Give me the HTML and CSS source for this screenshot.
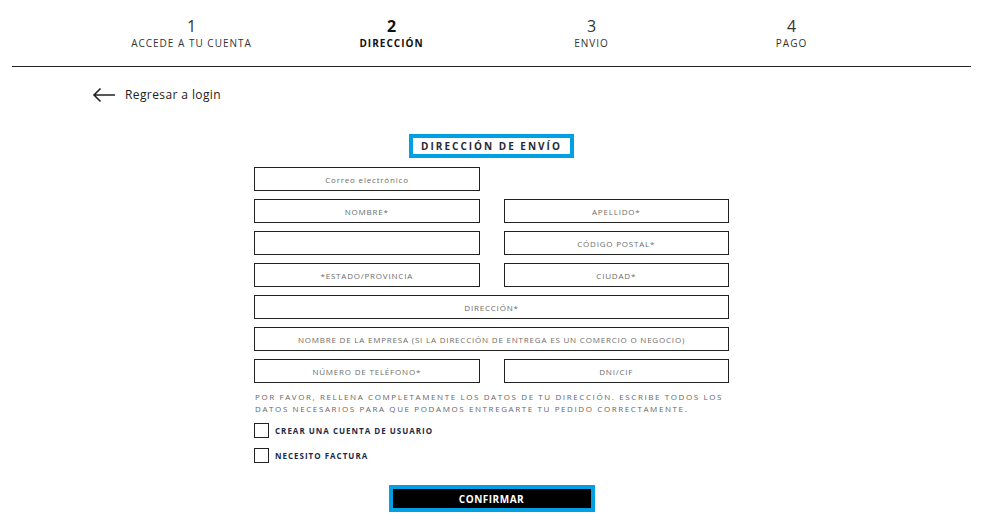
FILE: index.html
```html
<!DOCTYPE html>
<html lang="es">
<head>
    <meta charset="UTF-8">
    <meta name="viewport" content="width=device-width, initial-scale=1.0">
    <title>Dirección de envío</title>
    <link rel="stylesheet" href="styles.css">
</head>
<body>

<div id="checkout">
    <div class="steps">
        <div class="step">
            <div class="step-num">1</div>
            <div class="step-label">ACCEDE A TU CUENTA</div>
        </div>
        <div class="step active">
            <div class="step-num">2</div>
            <div class="step-label">DIRECCIÓN</div>
        </div>
        <div class="step">
            <div class="step-num">3</div>
            <div class="step-label">ENVIO</div>
        </div>
        <div class="step">
            <div class="step-num">4</div>
            <div class="step-label">PAGO</div>
        </div>
    </div>

    <a class="back-link" href="#">
        <svg width="24" height="16" viewBox="0 0 24 16">
            <path d="M23 8H2M8.5 1.5L2 8l6.5 6.5" fill="none" stroke="#222" stroke-width="1.6"/>
        </svg>
        <span>Regresar a login</span>
    </a>

    <div class="form-title-wrap">
        <h2 class="form-title">DIRECCIÓN DE ENVÍO</h2>
    </div>

    <form class="address-form">
        <div class="row">
            <input class="field" type="email" placeholder="Correo electrónico">
        </div>
        <div class="row">
            <input class="field" type="text" placeholder="NOMBRE*">
            <input class="field" type="text" placeholder="APELLIDO*">
        </div>
        <div class="row">
            <input class="field" type="text">
            <input class="field" type="text" placeholder="CÓDIGO POSTAL*">
        </div>
        <div class="row">
            <input class="field" type="text" placeholder="*ESTADO/PROVINCIA">
            <input class="field" type="text" placeholder="CIUDAD*">
        </div>
        <div class="row">
            <input class="field wide" type="text" placeholder="DIRECCIÓN*">
        </div>
        <div class="row">
            <input class="field wide" type="text" placeholder="NOMBRE DE LA EMPRESA (SI LA DIRECCIÓN DE ENTREGA ES UN COMERCIO O NEGOCIO)">
        </div>
        <div class="row">
            <input class="field" type="tel" placeholder="NÚMERO DE TELÉFONO*">
            <input class="field" type="text" placeholder="DNI/CIF">
        </div>

        <p class="note">POR FAVOR, RELLENA COMPLETAMENTE LOS DATOS DE TU DIRECCIÓN. ESCRIBE TODOS LOS DATOS NECESARIOS PARA QUE PODAMOS ENTREGARTE TU PEDIDO CORRECTAMENTE.</p>

        <label class="check">
            <input type="checkbox">
            <span class="box"></span>
            <span>CREAR UNA CUENTA DE USUARIO</span>
        </label>
        <label class="check">
            <input type="checkbox">
            <span class="box"></span>
            <span>NECESITO FACTURA</span>
        </label>

        <div class="submit-wrap">
            <button type="button" class="submit">CONFIRMAR</button>
        </div>
    </form>
</div>

</body>
</html>
```

FILE: styles.css
```css
body {
    font-family: "Open Sans", "Liberation Sans", Arial, sans-serif;
    background-color: #fff;
    color: #222;
    margin: 0;
    padding: 0;
}
#checkout {
    width: 959px;
    margin: 0 0 0 12px;
}

/* pasos del checkout */
.steps {
    display: flex;
    justify-content: center;
    padding-top: 16px;
    height: 50px;
    border-bottom: 1px solid #222;
}
.step {
    width: 200px;
    text-align: center;
    color: #333;
}
.step-num {
    font-size: 16px;
    line-height: 20px;
}
.step-label {
    font-size: 10px;
    letter-spacing: 1px;
    line-height: 14px;
}
.step.active {
    color: #111;
    font-weight: bold;
}

/* volver */
.back-link {
    display: flex;
    align-items: center;
    gap: 9px;
    margin: 19px 0 0 80px;
    color: #222;
    text-decoration: none;
    font-size: 12px;
    letter-spacing: 0.4px;
    width: max-content;
}

.form-title-wrap {
    display: flex;
    justify-content: center;
    margin-top: 31px;
}
.form-title {
    margin: 0;
    border: 4px solid #00a0e3;
    padding: 0 8px;
    height: 16px;
    line-height: 16px;
    font-size: 10px;
    letter-spacing: 2px;
    color: #2a2a33;
}

.address-form {
    width: 475px;
    margin: 9px auto 0;
}
.row {
    display: flex;
    gap: 24px;
    margin-bottom: 8px;
}
.field {
    box-sizing: border-box;
    width: 226px;
    height: 24px;
    border: 1px solid #222;
    padding: 0 4px;
    font-family: inherit;
    font-size: 8px;
    letter-spacing: 0.8px;
    text-align: center;
    outline: none;
}
.field.wide {
    width: 100%;
}
.field::placeholder {
    color: #6c6c6c;
}

.note {
    margin: 6px 0 8px 1px;
    font-size: 8px;
    letter-spacing: 1.6px;
    line-height: 12px;
    color: #666;
}

/* checkboxes */
.check {
    display: flex;
    align-items: center;
    gap: 6px;
    margin-bottom: 10px;
    font-size: 8px;
    font-weight: bold;
    letter-spacing: 1px;
    color: #1c2a4a;
    cursor: pointer;
}
.check input {
    display: none;
}
.check .box {
    box-sizing: border-box;
    width: 15px;
    height: 15px;
    border: 1px solid #222;
}

.submit-wrap {
    display: flex;
    justify-content: center;
    margin-top: 22px;
}
.submit {
    box-sizing: border-box;
    width: 206px;
    height: 27px;
    border: 4px solid #00a0e3;
    background-color: #000;
    color: #fff;
    font-family: inherit;
    font-size: 10px;
    font-weight: bold;
    letter-spacing: 0.5px;
    cursor: pointer;
}
```
